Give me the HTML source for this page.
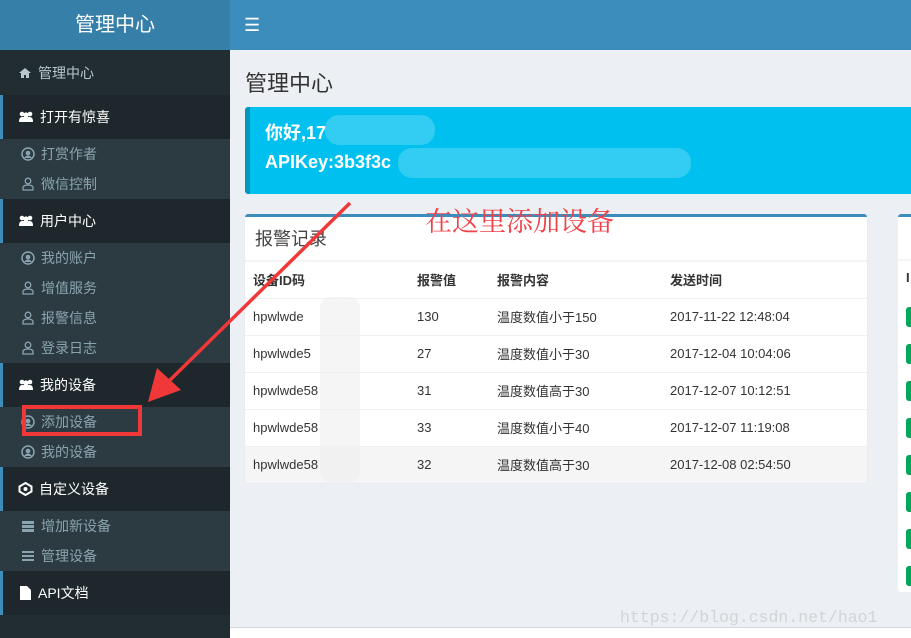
<!DOCTYPE html>
<html><head><meta charset="utf-8">
<style>
*{margin:0;padding:0;box-sizing:border-box}
body{width:911px;height:638px;overflow:hidden;background:#ecf0f5;font-family:"Liberation Sans","Noto Sans CJK SC",sans-serif;position:relative}
.logo{position:absolute;left:0;top:0;width:230px;height:50px;background:#367fa9;color:#fff;font-size:20px;text-align:center;line-height:50px}
.top{position:absolute;left:230px;top:0;right:0;height:50px;background:#3c8dbc;color:#fff;font-size:18px;line-height:50px;padding-left:14px}
.side{position:absolute;left:0;top:50px;width:230px;height:588px;background:#222d32}
.h{height:44px;color:#fff;font-size:14px;padding-left:15px;background:#1e282c;border-left:3px solid #3c8dbc;display:flex;align-items:center}
.h0{height:45px;background:#222d32;border-left:none;padding-left:18px;color:#b8c7ce}
.sub{background:#2c3b41}
.s{height:30px;color:#8aa4af;font-size:14px;padding-left:21px;display:flex;align-items:center}
.ic{display:inline-block;width:14px;height:14px;margin-right:6px}
h1{position:absolute;left:245px;top:66px;font-size:22px;font-weight:normal;color:#333}
.call{position:absolute;left:245px;top:107px;width:700px;height:87px;background:#00c0ef;border-left:5px solid #0097bc;border-radius:3px;color:#fff;font-weight:bold;font-size:18px;padding:12px 0 0 15px;line-height:29px}
.blur{position:absolute;background:rgba(255,255,255,.2);border-radius:14px}
.box{position:absolute;left:245px;top:214px;width:622px;height:268px;background:#fff;border-top:3px solid #3c8dbc;border-radius:3px;box-shadow:0 1px 1px rgba(0,0,0,.1)}
.bt{height:45px;line-height:45px;padding-left:10px;font-size:18px;color:#444;border-bottom:2px solid #f4f4f4}
table{border-collapse:collapse;width:100%;font-size:13px;color:#333}
td,th{height:37px;text-align:left;border-top:1px solid #f0f0f0;padding:0}
th{font-weight:bold;border-top:none;height:36px}
tr.g td{background:#f5f5f5}
.box2{position:absolute;left:898px;top:214px;width:20px;height:378px;background:#fff;border-top:3px solid #3c8dbc;border-radius:3px}
.gb{position:absolute;left:906px;width:10px;height:20px;background:#00a65a;border-radius:3px}
</style></head><body>
<div class="logo">管理中心</div>
<div class="top">&#9776;</div>
<div class="side">
<div class="h h0"><svg class="ic" viewBox="0 0 14 14"><path d="M7 2L1 7h2v5h3V9h2v3h3V7h2z" fill="#b8c7ce"/></svg>管理中心</div>
<div class="h"><svg class="ic" viewBox="0 0 16 14" style="width:16px"><circle cx="4" cy="4" r="2.3" fill="#fff"/><circle cx="12" cy="4" r="2.3" fill="#fff"/><circle cx="8" cy="5" r="2.6" fill="#fff"/><path d="M1 12q0-5 3-5h8q3 0 3 5z" fill="#fff"/></svg>打开有惊喜</div>
<div class="sub"><div class="s"><svg class="ic" viewBox="0 0 14 14"><circle cx="7" cy="7" r="6" fill="none" stroke="#8aa4af" stroke-width="1.5"/><circle cx="7" cy="6" r="2.3" fill="#8aa4af"/><path d="M3 11q4-5 8 0" fill="#8aa4af"/></svg>打赏作者</div><div class="s"><svg class="ic" viewBox="0 0 14 14"><circle cx="7" cy="4" r="2.8" fill="none" stroke="#8aa4af" stroke-width="1.3"/><path d="M2 13v-2q0-3 5-3t5 3v2z" fill="none" stroke="#8aa4af" stroke-width="1.3"/></svg>微信控制</div></div>
<div class="h"><svg class="ic" viewBox="0 0 16 14" style="width:16px"><circle cx="4" cy="4" r="2.3" fill="#fff"/><circle cx="12" cy="4" r="2.3" fill="#fff"/><circle cx="8" cy="5" r="2.6" fill="#fff"/><path d="M1 12q0-5 3-5h8q3 0 3 5z" fill="#fff"/></svg>用户中心</div>
<div class="sub"><div class="s"><svg class="ic" viewBox="0 0 14 14"><circle cx="7" cy="7" r="6" fill="none" stroke="#8aa4af" stroke-width="1.5"/><circle cx="7" cy="6" r="2.3" fill="#8aa4af"/><path d="M3 11q4-5 8 0" fill="#8aa4af"/></svg>我的账户</div><div class="s"><svg class="ic" viewBox="0 0 14 14"><circle cx="7" cy="4" r="2.8" fill="none" stroke="#8aa4af" stroke-width="1.3"/><path d="M2 13v-2q0-3 5-3t5 3v2z" fill="none" stroke="#8aa4af" stroke-width="1.3"/></svg>增值服务</div><div class="s"><svg class="ic" viewBox="0 0 14 14"><circle cx="7" cy="4" r="2.8" fill="none" stroke="#8aa4af" stroke-width="1.3"/><path d="M2 13v-2q0-3 5-3t5 3v2z" fill="none" stroke="#8aa4af" stroke-width="1.3"/></svg>报警信息</div><div class="s"><svg class="ic" viewBox="0 0 14 14"><circle cx="7" cy="4" r="2.8" fill="none" stroke="#8aa4af" stroke-width="1.3"/><path d="M2 13v-2q0-3 5-3t5 3v2z" fill="none" stroke="#8aa4af" stroke-width="1.3"/></svg>登录日志</div></div>
<div class="h"><svg class="ic" viewBox="0 0 16 14" style="width:16px"><circle cx="4" cy="4" r="2.3" fill="#fff"/><circle cx="12" cy="4" r="2.3" fill="#fff"/><circle cx="8" cy="5" r="2.6" fill="#fff"/><path d="M1 12q0-5 3-5h8q3 0 3 5z" fill="#fff"/></svg>我的设备</div>
<div class="sub"><div class="s"><svg class="ic" viewBox="0 0 14 14"><circle cx="7" cy="7" r="6" fill="none" stroke="#8aa4af" stroke-width="1.5"/><circle cx="7" cy="6" r="2.3" fill="#8aa4af"/><path d="M3 11q4-5 8 0" fill="#8aa4af"/></svg>添加设备</div><div class="s"><svg class="ic" viewBox="0 0 14 14"><circle cx="7" cy="7" r="6" fill="none" stroke="#8aa4af" stroke-width="1.5"/><circle cx="7" cy="6" r="2.3" fill="#8aa4af"/><path d="M3 11q4-5 8 0" fill="#8aa4af"/></svg>我的设备</div></div>
<div class="h"><svg class="ic" viewBox="0 0 14 14" style="width:15px"><path d="M7 1l6 3.5v5L7 13 1 9.5v-5z" fill="none" stroke="#fff" stroke-width="2"/><circle cx="7" cy="7" r="2" fill="#fff"/></svg>自定义设备</div>
<div class="sub"><div class="s"><svg class="ic" viewBox="0 0 14 14"><rect x="1" y="2" width="12" height="3" fill="#8aa4af"/><rect x="1" y="6" width="12" height="3" fill="#8aa4af"/><rect x="1" y="10" width="12" height="3" fill="#8aa4af"/></svg>增加新设备</div><div class="s"><svg class="ic" viewBox="0 0 14 14"><rect x="1" y="2" width="12" height="2" fill="#8aa4af"/><rect x="1" y="6" width="12" height="2" fill="#8aa4af"/><rect x="1" y="10" width="12" height="2" fill="#8aa4af"/></svg>管理设备</div></div>
<div class="h"><svg class="ic" viewBox="0 0 14 14"><path d="M2 0h7l4 4v10H2z" fill="#fff"/></svg>API文档</div>
</div>
<h1>管理中心</h1>
<div style="position:absolute;left:230px;top:627px;right:0;bottom:0;background:#fff;border-top:1px solid #d2d6de"></div>
<div class="call">你好,17<br>APIKey:3b3f3c</div>
<div class="blur" style="left:325px;top:115px;width:110px;height:30px"></div>
<div class="blur" style="left:398px;top:148px;width:293px;height:30px"></div>
<div class="box"><div class="bt">报警记录</div>
<table>
<tr><th style="padding-left:8px;width:172px">设备ID码</th><th style="width:80px">报警值</th><th style="width:173px">报警内容</th><th>发送时间</th></tr>
<tr><td style="padding-left:8px">hpwlwde</td><td>130</td><td>温度数值小于150</td><td>2017-11-22 12:48:04</td></tr>
<tr><td style="padding-left:8px">hpwlwde5</td><td>27</td><td>温度数值小于30</td><td>2017-12-04 10:04:06</td></tr>
<tr><td style="padding-left:8px">hpwlwde58</td><td>31</td><td>温度数值高于30</td><td>2017-12-07 10:12:51</td></tr>
<tr><td style="padding-left:8px">hpwlwde58</td><td>33</td><td>温度数值小于40</td><td>2017-12-07 11:19:08</td></tr>
<tr class="g"><td style="padding-left:8px">hpwlwde58</td><td>32</td><td>温度数值高于30</td><td>2017-12-08 02:54:50</td></tr>
</table></div>
<div style="position:absolute;left:320px;top:297px;width:40px;height:185px;background:rgba(238,238,238,.6);border-radius:10px"></div>
<div class="box2"></div>
<div style="position:absolute;left:898px;top:259px;width:13px;height:2px;background:#f4f4f4"></div>
<div style="position:absolute;left:906px;top:270px;font-size:13px;font-weight:bold;color:#333">I</div>
<div class="gb" style="top:307px"></div><div class="gb" style="top:344px"></div><div class="gb" style="top:381px"></div><div class="gb" style="top:418px"></div><div class="gb" style="top:455px"></div><div class="gb" style="top:492px"></div><div class="gb" style="top:529px"></div><div class="gb" style="top:566px"></div>
<div style="position:absolute;left:425px;top:200px;font-family:'Noto Serif CJK SC',serif;font-size:27px;color:#f04048">在这里添加设备</div>
<div style="position:absolute;left:22px;top:405px;width:120px;height:31px;border:4px solid #f03838"></div>
<svg style="position:absolute;left:0;top:0" width="911" height="638"><line x1="350" y1="203" x2="165" y2="385" stroke="#f03838" stroke-width="3.5"/><polygon points="148,402 157,368 181,390" fill="#f03838"/></svg>
<div style="position:absolute;left:620px;top:608px;font-family:'Liberation Mono',monospace;font-size:16.5px;color:rgba(170,170,170,.4)">https://blog.csdn.net/hao1</div>
</body></html>
